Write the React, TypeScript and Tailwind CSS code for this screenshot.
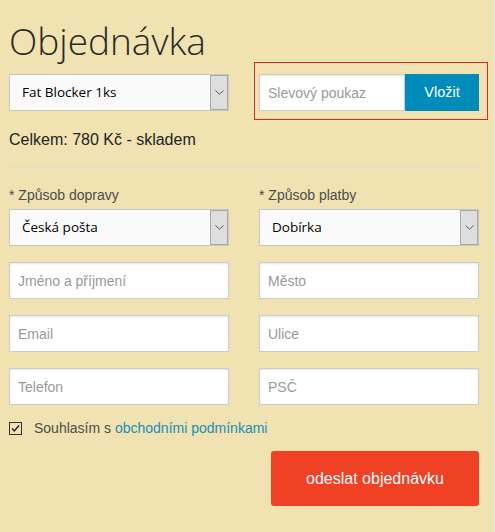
import React from 'react'

function FakeSelect({ value }: { value: string }) {
  return (
    <div className="flex h-[37px] w-full border border-[#c6c6c6] bg-[#fafafa]">
      <div className="flex flex-1 items-center pl-[12px] font-['Open_Sans',sans-serif] text-[13.5px] text-black">
        {value}
      </div>
      <div className="flex w-[18px] items-center justify-center self-stretch border border-[#a9a9a9] bg-[#dedede]">
        <svg width="9" height="5" viewBox="0 0 9 5" fill="none">
          <path d="M0.5 0.5L4.5 4.2L8.5 0.5" stroke="#555" strokeWidth="1" />
        </svg>
      </div>
    </div>
  )
}

function Field({ placeholder }: { placeholder: string }) {
  return (
    <input
      type="text"
      placeholder={placeholder}
      className="h-[37px] w-full border border-[#cccccc] bg-white px-[8px] text-[14px] text-[#333] shadow-[inset_0_1px_2px_rgba(0,0,0,0.1)] outline-none placeholder:text-[#9a9a9a]"
    />
  )
}

export default function App() {
  return (
    <div className="min-h-[532px] w-[495px] border-r border-[#e9e4cf] bg-[#f0e2b1] pl-[9px] pt-[17px] font-['Liberation_Sans',Arial,sans-serif] text-[#333]">
      <div className="w-[470px]">
        <h1 className="h-[48px] font-['Open_Sans',sans-serif] text-[37px] font-light leading-[48px] text-[#2a2a2a]">
          Objednávka
        </h1>

        <div className="mt-[9px] grid grid-cols-2 gap-x-[30px]">
          <FakeSelect value="Fat Blocker 1ks" />
          <div className="relative flex">
            <span className="pointer-events-none absolute -bottom-[9px] -left-[5px] -right-[9px] -top-[12px] border border-[#e3222c]" />
            <input
              type="text"
              placeholder="Slevový poukaz"
              className="h-[37px] min-w-0 flex-1 border border-[#cccccc] bg-white px-[8px] text-[14px] shadow-[inset_0_1px_2px_rgba(0,0,0,0.1)] outline-none placeholder:text-[#9a9a9a]"
            />
            <button className="h-[37px] w-[74px] bg-[#008cba] text-[14.5px] text-white">Vložit</button>
          </div>
        </div>

        <p className="mt-[19px] text-[16px] leading-[20px] text-[#222]">Celkem: 780 Kč - skladem</p>

        <div className="mt-[17px] h-px bg-[#dddddd]" />

        <div className="mt-[18px] grid grid-cols-2 gap-x-[30px]">
          <div className="flex flex-col">
            <label className="text-[14px] leading-[18px] text-[#4d4d4d]">* Způsob dopravy</label>
            <div className="mt-[5px]">
              <FakeSelect value="Česká pošta" />
            </div>
            <div className="mt-[16px] flex flex-col gap-[16px]">
              <Field placeholder="Jméno a příjmení" />
              <Field placeholder="Email" />
              <Field placeholder="Telefon" />
            </div>
          </div>
          <div className="flex flex-col">
            <label className="text-[14px] leading-[18px] text-[#4d4d4d]">* Způsob platby</label>
            <div className="mt-[5px]">
              <FakeSelect value="Dobírka" />
            </div>
            <div className="mt-[16px] flex flex-col gap-[16px]">
              <Field placeholder="Město" />
              <Field placeholder="Ulice" />
              <Field placeholder="PSČ" />
            </div>
          </div>
        </div>

        <div className="mt-[14px] flex h-[18px] items-center gap-[12px]">
          <span className="flex h-[13px] w-[13px] items-center justify-center border border-[#333]">
            <svg width="11" height="11" viewBox="0 0 11 11" fill="none">
              <path d="M2 5.5L4.3 8L9 2.5" stroke="#222" strokeWidth="1.3" />
            </svg>
          </span>
          <span className="text-[14px] text-[#4d4d4d]">
            Souhlasím s <a className="text-[#1a8fb8]">obchodními podmínkami</a>
          </span>
        </div>

        <div className="mt-[14px] flex justify-end">
          <button className="h-[55px] w-[208px] rounded-[3px] bg-[#f04124] text-[16px] text-white">
            odeslat objednávku
          </button>
        </div>
      </div>
    </div>
  )
}
